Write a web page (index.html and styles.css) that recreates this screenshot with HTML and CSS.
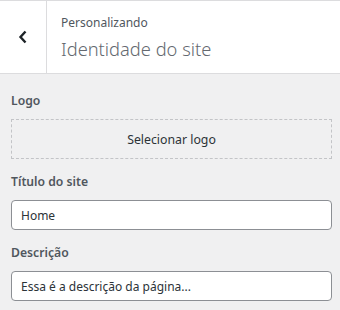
FILE: index.html
```html
<!DOCTYPE html>
<html>
<head>
<meta charset="UTF-8">
<link rel="stylesheet" href="styles.css">
</head>
<body>
<div class="header">
	<div class="back">
		<svg width="10" height="14" viewBox="0 0 10 14"><path d="M7.5 1.5 L2.5 7 L7.5 12.5" fill="none" stroke="#1d2327" stroke-width="2.4"/></svg>
	</div>
	<div class="title">
		<span class="sub">Personalizando</span>
		<h3>Identidade do site</h3>
	</div>
</div>
<div class="content">
	<div class="field">
		<label>Logo</label>
		<div class="upload">Selecionar logo</div>
	</div>
	<div class="field">
		<label>Título do site</label>
		<input type="text" class="text" value="Home">
	</div>
	<div class="field">
		<label>Descrição</label>
		<input type="text" class="text" value="Essa é a descrição da página...">
	</div>
</div>
</body>
</html>
```

FILE: styles.css
```css
* {
	padding: 0;
	margin: 0;
	box-sizing: border-box;
	font-family: 'Noto Sans', 'Open Sans', sans-serif;
}
body {
	background: #f0f0f1;
	color: #50575e;
}
.header {
	display: flex;
	height: 74px;
	background: #fff;
	border-top: 1px solid #dcdcde;
	border-bottom: 1px solid #dcdcde;
}
.back {
	width: 47px;
	border-right: 1px solid #dcdcde;
	display: flex;
	align-items: center;
	justify-content: center;
}
.title {
	padding: 13px 0 0 14px;
}
.sub {
	display: block;
	font-size: 12px;
	line-height: 18px;
	color: #50575e;
}
.title h3 {
	font-size: 18.3px;
	font-weight: 300;
	line-height: 28px;
	margin-top: 3px;
	color: #646970;
}
.content {
	padding: 18px 8px 0 11px;
}
.field {
	margin-bottom: 14px;
}
label {
	display: block;
	font-size: 12.2px;
	font-weight: 600;
	line-height: 18px;
	margin-bottom: 9px;
}
.upload {
	height: 40px;
	border: 1px dashed #c3c4c7;
	display: flex;
	align-items: center;
	justify-content: center;
	font-size: 12.3px;
	color: #2c3338;
}
.text {
	width: 100%;
	height: 30px;
	border: 1px solid #8c8f94;
	border-radius: 4px;
	background: #fff;
	padding: 0 9px;
	font-size: 12px;
	color: #2c3338;
	outline: none;
}
```
